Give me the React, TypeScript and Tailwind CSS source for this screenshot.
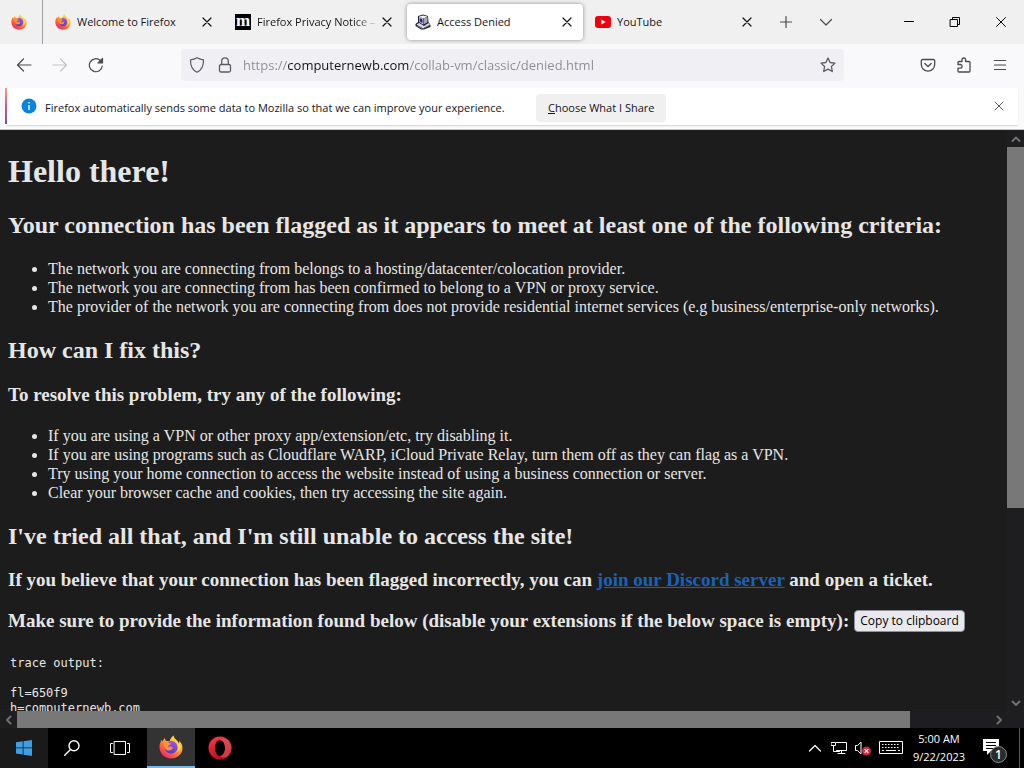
import React from "react";

const UI_FONT = "font-['Open_Sans','Noto_Sans',sans-serif]";

function Glyph({ d, size = 16, width = 1, className = "" }: { d: string; size?: number; width?: number; className?: string }) {
  return (
    <svg
      width={size}
      height={size}
      viewBox={`0 0 ${size} ${size}`}
      fill="none"
      stroke="currentColor"
      strokeWidth={width}
      strokeLinecap="round"
      strokeLinejoin="round"
      aria-hidden="true"
      className={`shrink-0 ${className}`}
    >
      <path d={d} />
    </svg>
  );
}

function FirefoxLogo({ size, id }: { size: number; id: string }) {
  return (
    <svg width={size} height={size} viewBox="0 0 48 48" aria-hidden="true" className="shrink-0">
      <defs>
        <linearGradient id={`${id}-body`} x1="0.85" y1="0.05" x2="0.2" y2="0.95">
          <stop offset="0" stopColor="#fff14f" />
          <stop offset="0.35" stopColor="#ffb52e" />
          <stop offset="0.65" stopColor="#ff6a3a" />
          <stop offset="1" stopColor="#f0246e" />
        </linearGradient>
        <linearGradient id={`${id}-globe`} x1="0.7" y1="0" x2="0.3" y2="1">
          <stop offset="0" stopColor="#a252f0" />
          <stop offset="1" stopColor="#4d3fc4" />
        </linearGradient>
      </defs>
      <path
        fill={`url(#${id}-body)`}
        d="M29 1c1 5 4 7 7 10 2 2 3 4 4 6 1-2 1-4 0-6 5 5 7 10 7 15 0 12-10 21-23 21S1 37 1 24c0-6 2-11 5-15 0 2 0 3 1 4 1-3 3-5 5-7 0 3 1 5 3 6 2 0 4 0 6 1 1-5 4-9 8-12z"
      />
      <path fill={`url(#${id}-globe)`} d="M25 12c7 0 12 6 12 13s-6 12-13 12-12-5-12-10c2 3 5 4 8 3 3-1 4-3 7-4 0-2-2-3-5-3-3 0-5 0-6-2 2-1 4-2 5-4-2-1-3-2-3-3 2-1 5-2 8-2z" />
      <path fill="#ff9230" d="M8 15c3-2 6-2 9-1 2 1 4 3 7 3 0 2-4 3-6 5-1 2 0 3 3 4 3 0 5-1 7 0-2 3-5 5-8 5-5 0-8-4-9-8-1-3-3-5-3-8z" />
      <path fill="#ffd84a" d="M30 7c1 5 7 9 8 16 1 5-1 9-4 12 7-3 10-9 9-15-1 1-2 1-3 0-1-5-7-7-10-13z" />
    </svg>
  );
}

function MozillaLogo() {
  return (
    <span aria-hidden="true" className="flex h-4 w-4 shrink-0 items-center justify-center bg-black font-['Liberation_Serif',serif] text-[17px] leading-none font-bold text-white">
      <span className="pb-1">m</span>
    </span>
  );
}

function ComputerIcon() {
  return (
    <svg width="16" height="16" viewBox="0 0 16 16" aria-hidden="true" className="shrink-0">
      <path d="M3 2 8 .5l5 1.500.5 6 2 3v2L9 15.500 6 15.500.5 12v-2L3 8z" fill="#22222c" />
      <path d="M4 2.500 8 4.500v6L4 8z" fill="#c9c9d6" />
      <path d="M4 2.500 8 1.500l4.500 1L8.500 4.500z" fill="#f2f2f8" />
      <path d="M8.500 4.500l4-1.800v5.500l-4 2.300z" fill="#a5a5b8" />
      <path d="M4.700 4 7.500 5.500v3.500L4.700 7.500z" fill="#23239a" />
      <path d="M1.500 10.500 4 9l5 3 4.500-3 1.500 2-7 3.500z" fill="#dcdce6" />
      <path d="M2 11.700l5 2.800M9 14l5-2.500" stroke="#6d6d80" fill="none" />
    </svg>
  );
}

function YouTubeIcon() {
  return (
    <svg width="16" height="16" viewBox="0 0 16 16" aria-hidden="true" className="shrink-0">
      <rect x="0" y="2" width="16" height="12" rx="3" fill="#f0000e" />
      <path d="M6.300 5.500v5L10.700 8z" fill="#fff" />
    </svg>
  );
}

const CLOSE = "M4 4l8 8M12 4l-8 8";

function Tab({ icon, title, active = false, fade = false }: { icon: React.ReactNode; title: string; active?: boolean; fade?: boolean }) {
  return (
    <div
      role="tab"
      aria-selected={active}
      className={`flex h-9 w-44 min-w-0 items-center rounded px-2 ${active ? "bg-white shadow-[0_0_4px_rgba(0,0,0,0.4)]" : ""}`}
    >
      {icon}
      <span className={`ml-1.5 min-w-0 flex-1 overflow-hidden text-[11px] leading-4 whitespace-nowrap text-[#15141a] ${fade ? "[mask-image:linear-gradient(to_right,black_80%,transparent)]" : ""}`}>
        {title}
      </span>
      <button type="button" aria-label={`Close ${title}`} className="shrink-0 text-[#15141a]">
        <Glyph width={1.2} d={CLOSE} />
      </button>
    </div>
  );
}

function ToolButton({ label, children, dim = false }: { label: string; children: React.ReactNode; dim?: boolean }) {
  return (
    <button type="button" aria-label={label} className={`flex h-8 w-9 shrink-0 items-center justify-center ${dim ? "text-[#c4c4c8]" : "text-[#4a4a50]"}`}>
      {children}
    </button>
  );
}

function TabStrip() {
  return (
    <div className="flex h-11 shrink-0 items-center bg-[#f0f0f0]">
      <div role="tablist" className="flex min-w-0 items-center gap-1">
        <div role="tab" aria-label="Firefox" className="flex h-11 w-[43px] shrink-0 items-center justify-center border-r border-[#a0a0a4] pr-1">
          <FirefoxLogo size={16} id="pin" />
        </div>
        <Tab icon={<FirefoxLogo size={16} id="tab" />} title="Welcome to Firefox" />
        <Tab icon={<MozillaLogo />} title="Firefox Privacy Notice –" fade />
        <Tab icon={<ComputerIcon />} title="Access Denied" active />
        <Tab icon={<YouTubeIcon />} title="YouTube" />
      </div>
      <div className="flex items-center pl-[3px] text-[#4a4a50]">
        <button type="button" aria-label="New tab" className="flex h-9 w-10 items-center justify-center">
          <Glyph width={1.2} d="M8 2.500v11M2.500 8h11" />
        </button>
        <button type="button" aria-label="List all tabs" className="flex h-9 w-10 items-center justify-center">
          <Glyph width={1.2} d="M2.500 5.500L8 11l5.500-5.500" />
        </button>
      </div>
      <div className="ml-auto flex items-center text-black">
        <button type="button" aria-label="Minimize" className="flex h-9 w-[46px] items-center justify-center">
          <Glyph d="M3.500 7.500h9" />
        </button>
        <button type="button" aria-label="Restore" className="flex h-9 w-[46px] items-center justify-center">
          <Glyph d="M3.500 5.500h7v7h-7zM5.500 5.500v-2h7v7h-2" />
        </button>
        <button type="button" aria-label="Close window" className="flex h-9 w-[46px] items-center justify-center">
          <Glyph d="M3.500 3.500l9 9M12.500 3.500l-9 9" />
        </button>
      </div>
    </div>
  );
}

function Toolbar() {
  return (
    <div className="flex h-[43px] shrink-0 items-center bg-[#f9f9fb] px-1.5 pb-0.5">
      <ToolButton label="Back">
        <Glyph width={1.2} d="M15 8H1.500M7.500 2L1.500 8l6 6" />
      </ToolButton>
      <ToolButton label="Forward" dim>
        <Glyph width={1.2} d="M1 8h13.500M8.500 2l6 6-6 6" />
      </ToolButton>
      <ToolButton label="Reload">
        <svg width="16" height="16" viewBox="0 0 16 16" fill="none" stroke="currentColor" strokeWidth="1.200" strokeLinecap="round" strokeLinejoin="round" aria-hidden="true">
          <path d="M14.300 9a6.500 6.500 0 1 1-2-5.500L14 5" />
          <path d="M14.500 1.500v4.500H10z" fill="currentColor" />
        </svg>
      </ToolButton>
      <div className="mr-[66px] ml-[67px] flex h-8 min-w-0 flex-1 items-center rounded bg-[#f0f0f4] px-2 text-[#5b5b66]">
        <Glyph width={1.2} d="M8 .7c2.200 1.300 4.200 1.900 6.500 2.100.2 6-1.500 10.200-6.500 12.500C3 13 1.300 8.800 1.500 2.800 3.800 2.600 5.800 2 8 .7z" />
        <svg width="16" height="16" viewBox="0 0 16 16" fill="none" stroke="currentColor" strokeWidth="1.300" aria-hidden="true" className="ml-3 shrink-0">
          <rect x="2.500" y="7.500" width="11" height="7.500" rx="1.500" />
          <path d="M4.700 7.500V4.200a3.300 3.300 0 0 1 6.600 0v3.300" />
        </svg>
        <input
          aria-label="Address"
          spellCheck={false}
          defaultValue="https://computernewb.com/collab-vm/classic/denied.html"
          className="ml-2.5 min-w-0 flex-1 bg-[linear-gradient(to_right,#8b8b93_45px,#15141a_45px,#15141a_166px,#8b8b93_166px)] bg-clip-text text-[13px] leading-5 text-transparent outline-none"
        />
        <button type="button" aria-label="Bookmark this page" className="shrink-0">
          <Glyph width={1.3} d="M8 1l2.100 4.500 4.900.6-3.600 3.400.9 5L8 12.100l-4.300 2.400.9-5L1 6.100l4.900-.6z" />
        </button>
      </div>
      <ToolButton label="Save to Pocket">
        <Glyph width={1.3} d="M2.500 2.500h11a1.200 1.200 0 0 1 1.200 1.200V7.500a6.700 6.700 0 0 1-13.400 0V3.700A1.200 1.200 0 0 1 2.500 2.500zM4.800 6.500L8 9.500l3.200-3" />
      </ToolButton>
      <ToolButton label="Extensions">
        <Glyph width={1.3} d="M2 7.500V5.500a1 1 0 0 1 1-1h3V2.800a1.800 1.800 0 0 1 3.600 0v1.700h3.400a1 1 0 0 1 1 1v8.500a1 1 0 0 1-1 1H3a1 1 0 0 1-1-1v-2.800h2.200a1.800 1.800 0 0 0 0-3.700z" />
      </ToolButton>
      <ToolButton label="Application menu">
        <Glyph width={1.2} d="M2.500 3.500h11M2.500 8h11M2.500 12.500h11" />
      </ToolButton>
    </div>
  );
}

function NoticeBar() {
  return (
    <div className="flex h-[43px] shrink-0 items-start border-b border-[#c8c8cc] bg-[#f9f9fb] pt-px pr-1.5 pl-[5px]">
      <div className="h-9 w-0.5 shrink-0 bg-linear-to-b from-[#ff9f6b] via-[#d0568f] to-[#6a4fc0]" />
      <div className="flex h-[37px] min-w-0 flex-1 items-center bg-white pt-0.5 pr-[11px] pl-3.5 text-[11px] leading-4 text-[#15141a] shadow-[0_1px_1px_rgba(0,0,0,0.12)]">
        <svg width="16" height="16" viewBox="0 0 16 16" aria-hidden="true" className="mb-1 shrink-0">
          <circle cx="8" cy="8" r="7.500" fill="#0a84e0" />
          <path d="M8 4v1.400M8 7v5" stroke="#fff" strokeWidth="1.400" />
        </svg>
        <p className="ml-2 min-w-[471px] whitespace-nowrap">Firefox automatically sends some data to Mozilla so that we can improve your experience.</p>
        <button type="button" className="ml-5 h-7 shrink-0 rounded bg-[#f0f0f0] px-3 whitespace-nowrap">
          <u>C</u>hoose What I Share
        </button>
        <button type="button" aria-label="Dismiss" className="mb-1 ml-auto text-[#5b5b66]">
          <Glyph d={CLOSE} />
        </button>
      </div>
    </div>
  );
}

const CRITERIA = [
  "The network you are connecting from belongs to a hosting/datacenter/colocation provider.",
  "The network you are connecting from has been confirmed to belong to a VPN or proxy service.",
  "The provider of the network you are connecting from does not provide residential internet services (e.g business/enterprise-only networks).",
];

const FIXES = [
  "If you are using a VPN or other proxy app/extension/etc, try disabling it.",
  "If you are using programs such as Cloudflare WARP, iCloud Private Relay, turn them off as they can flag as a VPN.",
  "Try using your home connection to access the website instead of using a business connection or server.",
  "Clear your browser cache and cookies, then try accessing the site again.",
];

function Bullets({ items }: { items: string[] }) {
  return (
    <ul className="mt-5 list-disc pl-10 text-base leading-[19px]">
      {items.map((t) => (
        <li key={t}>{t}</li>
      ))}
    </ul>
  );
}

function DeniedPage() {
  return (
    <main className="min-h-0 min-w-0 flex-1 overflow-hidden px-2 pt-[23px] font-['Liberation_Serif',serif] whitespace-nowrap text-[#e6e6e6]">
      <h1 className="text-[32px] leading-9 font-bold">Hello there!</h1>
      <h2 className="mt-[22px] text-2xl leading-7 font-bold">Your connection has been flagged as it appears to meet at least one of the following criteria:</h2>
      <Bullets items={CRITERIA} />
      <h2 className="mt-5 text-2xl leading-7 font-bold">How can I fix this?</h2>
      <h3 className="mt-5 text-[19px] leading-[22px] font-bold">To resolve this problem, try any of the following:</h3>
      <Bullets items={FIXES} />
      <h2 className="mt-5 text-2xl leading-7 font-bold">I've tried all that, and I'm still unable to access the site!</h2>
      <h3 className="mt-[19px] text-[19px] leading-[22px] font-bold">
        If you believe that your connection has been flagged incorrectly, you can{" "}
        <a href="#discord" className="text-[#1a62b8] underline">join our Discord server</a> and open a ticket.
      </h3>
      <h3 className="mt-[19px] flex items-center gap-[5px] text-[19px] leading-[22px] font-bold">
        Make sure to provide the information found below (disable your extensions if the below space is empty):
        <button type="button" className="h-[22px] rounded border border-[#8f8f9d] bg-[#e9e9ed] px-[5px] font-['Open_Sans','Noto_Sans',sans-serif] text-xs leading-none font-normal text-black">
          Copy to clipboard
        </button>
      </h3>
      <pre className="mt-6 pl-0.5 font-['DejaVu_Sans_Mono',monospace] text-xs leading-[15px]">
        {"trace output:\n\nfl=650f9\nh=computernewb.com"}
      </pre>
    </main>
  );
}

function Arrow({ d }: { d: string }) {
  return (
    <span className="flex h-[17px] w-[17px] shrink-0 items-center justify-center text-[#6e6e6e]">
      <Glyph size={12} width={2} d={d} />
    </span>
  );
}

function Viewport() {
  return (
    <div className="flex min-h-0 flex-1 flex-col bg-[#1c1c1c]">
      <div className="flex min-h-0 flex-1">
        <DeniedPage />
        <div className="flex w-[17px] shrink-0 flex-col bg-[#1e1e20]">
          <Arrow d="M2.500 8L6 4.500 9.500 8" />
          <div className="min-h-0 flex-1">
            <div className="h-[66%] bg-[#787878]" />
          </div>
          <Arrow d="M2.500 4.500L6 8l3.500-3.500" />
        </div>
      </div>
      <div className="flex h-[17px] shrink-0 bg-[#1e1e20] pr-[17px]">
        <Arrow d="M7.500 2.500L4 6l3.500 3.500" />
        <div className="min-w-0 flex-1">
          <div className="h-full w-[91.8%] bg-[#787878]" />
        </div>
        <Arrow d="M4.500 2.500L8 6l-3.500 3.500" />
      </div>
    </div>
  );
}

function Taskbar() {
  return (
    <footer className="flex h-10 shrink-0 items-stretch bg-black text-white">
      <button type="button" aria-label="Start" className="flex w-12 items-center justify-center bg-[#1a1a1a]">
        <svg width="16" height="16" viewBox="0 0 16 16" fill="#3f9fe4" aria-hidden="true">
          <path d="M0 2.300L6.700 1.300v6.200H0zM7.500 1.200L16 0v7.500H7.500zM0 8.300h6.700v6.300L0 13.600zM7.500 8.300H16V16l-8.500-1.200z" />
        </svg>
      </button>
      <button type="button" aria-label="Search" className="flex w-12 items-center justify-center">
        <Glyph width={1.4} d="M15 5.800a5 5 0 1 1-10 0a5 5 0 0 1 10 0zM6.500 9.400L.7 15.300" />
      </button>
      <button type="button" aria-label="Task view" className="flex w-12 items-center justify-center">
        <Glyph size={20} d="M4.500 3.500h11v13h-11zM2.500 5.500h-2v9h2M17.500 5.500h2v9h-2" />
      </button>
      <div className="ml-[3px] flex gap-px">
        <button type="button" aria-label="Firefox" className="flex w-12 items-center justify-center border-b-2 border-[#76b9ed] bg-[#333]">
          <FirefoxLogo size={24} id="task" />
        </button>
        <button type="button" aria-label="Opera" className="flex w-12 items-center justify-center">
          <svg width="24" height="24" viewBox="0 0 24 24" aria-hidden="true">
            <defs>
              <linearGradient id="opera-ring" x1="0" y1="0" x2="0.4" y2="1">
                <stop offset="0" stopColor="#ff3b45" />
                <stop offset="1" stopColor="#b5101c" />
              </linearGradient>
            </defs>
            <path fillRule="evenodd" fill="url(#opera-ring)" d="M12 .5a11.500 11.500 0 1 0 0 23a11.500 11.500 0 1 0 0-23zM12 4.200c3 0 5 3.500 5 7.800s-2 7.800-5 7.800-5-3.500-5-7.800 2-7.800 5-7.800z" />
            <path fill="#e0616a" d="M12 4.200c2-2 5-2 7.600-.8a11.500 11.500 0 0 1 0 17.200C17 22 14 21.800 12 19.800c3 0 5-3.500 5-7.800s-2-7.800-5-7.800z" opacity=".55" />
          </svg>
        </button>
      </div>
      <div className="ml-auto flex items-center">
        <button type="button" aria-label="Show hidden icons" className="flex w-6 justify-center">
          <Glyph d="M2.500 11L8 5.500l5.500 5.500" width={1.2} />
        </button>
        <button type="button" aria-label="Network" className="flex w-6 justify-center">
          <Glyph d="M5.500 2.500h10v8h-10M10.500 10.500v3M7 13.500h7M.5 2.500h4v3h-4zM2.500 5.500v6h6" />
        </button>
        <button type="button" aria-label="Volume muted" className="flex w-6 justify-center">
          <svg width="18" height="16" viewBox="0 0 18 16" fill="none" aria-hidden="true">
            <path d="M1.500 5.500h2l3.500-3.500v12l-3.500-3.500h-2z" stroke="#fff" />
            <circle cx="12.500" cy="11" r="4.500" fill="#d0283c" />
            <path d="M10.700 9.200l3.600 3.600M14.300 9.200l-3.600 3.600" stroke="#fff" strokeWidth="1.200" />
          </svg>
        </button>
        <button type="button" aria-label="Touch keyboard" className="flex w-8 justify-center">
          <svg width="24" height="14" viewBox="0 0 24 14" fill="none" stroke="#fff" aria-hidden="true">
            <path d="M.5.500h23v12h-23z" />
            <path d="M3 3.500h18M3 6.500h18" strokeDasharray="1.500 1.500" />
            <path d="M3 9.500h2M7 9.500h10M19 9.500h2" />
          </svg>
        </button>
        <div className="flex w-16 flex-col items-center text-[11px] leading-[18px] whitespace-nowrap">
          <span>5:00 AM</span>
          <span>9/22/2023</span>
        </div>
        <button type="button" aria-label="Notifications" className="flex w-12 justify-center pt-1">
          <svg width="26" height="26" viewBox="0 0 26 26" aria-hidden="true">
            <path d="M1 2h16v12H9l-4 4v-4H1z" fill="#fff" />
            <path d="M4 5.500h10M4 8.500h10M4 11.500h7" stroke="#000" />
            <circle cx="16.500" cy="17.500" r="8" fill="#2b2b2b" stroke="#8a8a8a" />
            <text x="16.500" y="22" textAnchor="middle" fontSize="12" fontWeight="600" fill="#fff" fontFamily="Open Sans, sans-serif">1</text>
          </svg>
        </button>
        <div className="h-10 w-[5px] border-l border-[#5a5a5a]" />
      </div>
    </footer>
  );
}

export default function App() {
  return (
    <div className={`flex h-screen flex-col overflow-hidden ${UI_FONT}`}>
      <TabStrip />
      <Toolbar />
      <NoticeBar />
      <Viewport />
      <Taskbar />
    </div>
  );
}
